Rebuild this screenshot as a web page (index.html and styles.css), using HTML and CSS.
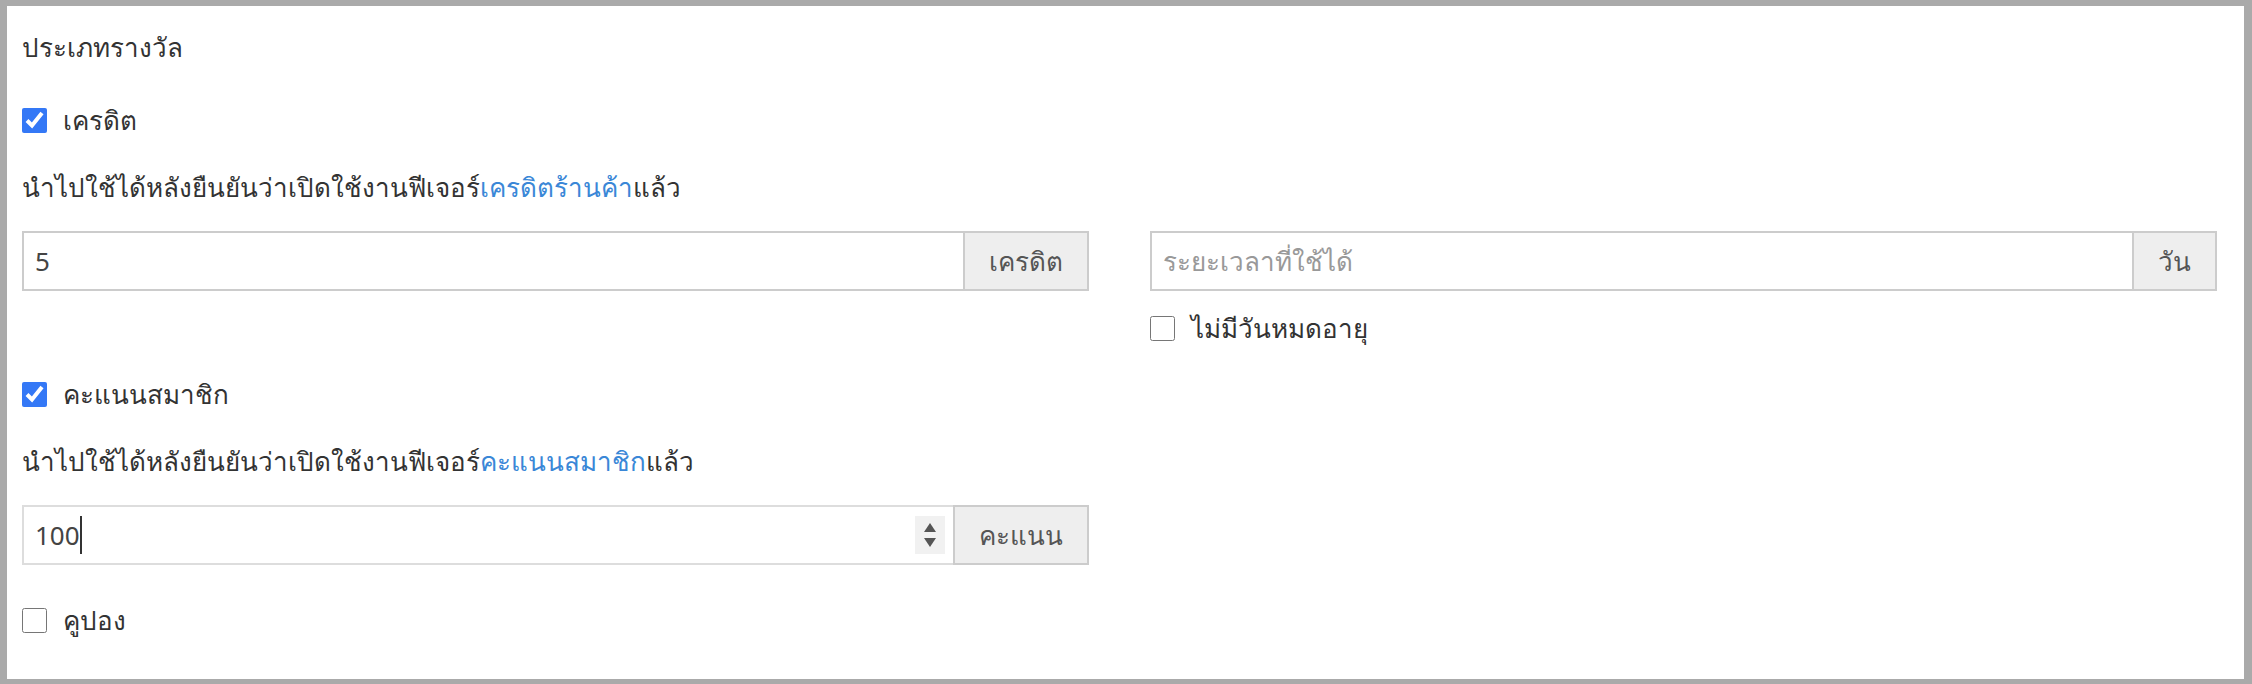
FILE: index.html
```html
<!DOCTYPE html>
<html lang="th">
<head>
    <meta charset="UTF-8">
    <meta name="viewport" content="width=device-width, initial-scale=1.0">
    <title>ประเภทรางวัล</title>
    <link rel="stylesheet" href="styles.css">
</head>
<body>

    <div class="panel">
        <div class="title">ประเภทรางวัล</div>

        <!-- Credit reward -->
        <label class="check check-first">
            <input type="checkbox" checked />
            <span>เครดิต</span>
        </label>
        <div class="hint">นำไปใช้ได้หลังยืนยันว่าเปิดใช้งานฟีเจอร์<a href="javascript:void(0);">เครดิตร้านค้า</a>แล้ว</div>

        <div class="row">
            <div class="col">
                <div class="input-group">
                    <input type="text" class="field" value="5" />
                    <span class="addon">เครดิต</span>
                </div>
            </div>
            <div class="col">
                <div class="input-group">
                    <input type="text" class="field" placeholder="ระยะเวลาที่ใช้ได้" />
                    <span class="addon">วัน</span>
                </div>
                <label class="check check-sub">
                    <input type="checkbox" />
                    <span>ไม่มีวันหมดอายุ</span>
                </label>
            </div>
        </div>

        <!-- Member points reward -->
        <label class="check check-section">
            <input type="checkbox" checked />
            <span>คะแนนสมาชิก</span>
        </label>
        <div class="hint">นำไปใช้ได้หลังยืนยันว่าเปิดใช้งานฟีเจอร์<a href="javascript:void(0);">คะแนนสมาชิก</a>แล้ว</div>

        <div class="row row-points">
            <div class="col">
                <div class="input-group">
                    <div class="field field-number">
                        <span class="value">100</span>
                        <span class="caret"></span>
                        <span class="spinner">
                            <span class="arrow-up"></span>
                            <span class="arrow-down"></span>
                        </span>
                    </div>
                    <span class="addon">คะแนน</span>
                </div>
            </div>
            <div class="col"></div>
        </div>

        <!-- Coupon reward -->
        <label class="check check-last">
            <input type="checkbox" />
            <span>คูปอง</span>
        </label>
    </div>

</body>
</html>
```

FILE: styles.css
```css
/* Reset */
body {
    margin: 0;
    padding: 0;
    background: #aaaaaa;
    font-family: 'Noto Sans', sans-serif;
    font-size: 26px;
    color: #333;
}

.panel {
    background: #ffffff;
    margin: 6px 8px 0 7px;
    height: 673px;
    box-sizing: border-box;
    padding: 24px 27px 0 15px;
}

.title {
    line-height: 34px;
}

/* Checkboxes */
.check {
    display: flex;
    align-items: center;
    gap: 16px;
    height: 34px;
    cursor: pointer;
}

.check input {
    width: 25px;
    height: 25px;
    margin: 0;
    accent-color: #3478f6;
}

.check-first {
    margin-top: 39px;
}

.check-section {
    margin-top: 32px;
}

.check-last {
    margin-top: 38px;
}

.check-sub {
    margin-top: 20px;
}

.hint {
    margin-top: 33px;
    line-height: 34px;
}

.hint a {
    color: #3a87d7;
    text-decoration: none;
}

/* Input groups */
.row {
    display: grid;
    grid-template-columns: 1fr 1fr;
    column-gap: 61px;
    margin-top: 27px;
}

.row-points {
    margin-top: 27px;
}

.input-group {
    display: flex;
    height: 60px;
}

.field {
    flex: 1;
    min-width: 0;
    box-sizing: border-box;
    height: 60px;
    border: 2px solid #cccccc;
    border-right: none;
    padding: 0 11px;
    font-family: inherit;
    font-size: 26px;
    color: #444;
    outline: none;
}

.field::placeholder {
    color: #999;
}

.addon {
    display: flex;
    align-items: center;
    justify-content: center;
    box-sizing: border-box;
    padding: 0 24px;
    background: #eeeeee;
    border: 2px solid #cccccc;
    color: #555;
}

/* Number field with spinner */
.field-number {
    display: flex;
    align-items: center;
    border-color: #dddddd;
    padding-right: 8px;
}

.caret {
    width: 2px;
    height: 38px;
    background: #333;
}

.spinner {
    margin-left: auto;
    width: 30px;
    height: 38px;
    background: #f1f1f1;
    display: flex;
    flex-direction: column;
    align-items: center;
    justify-content: center;
    gap: 6px;
}

.arrow-up, .arrow-down {
    width: 0;
    height: 0;
    border-left: 6px solid transparent;
    border-right: 6px solid transparent;
}

.arrow-up {
    border-bottom: 9px solid #555;
}

.arrow-down {
    border-top: 9px solid #555;
}
```
